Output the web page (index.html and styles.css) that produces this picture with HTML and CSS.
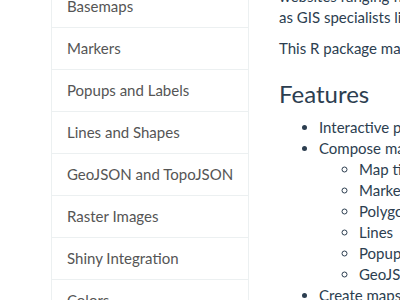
FILE: index.html
```
<!DOCTYPE html>
<html lang="en">
<head>
    <meta charset="UTF-8">
    <meta name="viewport" content="width=device-width, initial-scale=1.0">
    <link rel="stylesheet" href="styles.css">
</head>
<body>

    <div class="page">
        <div class="sidebar">
            <a class="list-item" href="#">Basemaps</a>
            <a class="list-item" href="#">Markers</a>
            <a class="list-item" href="#">Popups and Labels</a>
            <a class="list-item" href="#">Lines and Shapes</a>
            <a class="list-item" href="#">GeoJSON and TopoJSON</a>
            <a class="list-item" href="#">Raster Images</a>
            <a class="list-item" href="#">Shiny Integration</a>
            <a class="list-item" href="#">Colors</a>
            <a class="list-item" href="#">Legends</a>
        </div>

        <div class="content">
            <p>websites ranging from The New York Times and The Washington Post to GitHub and Flickr, as well<br>
            as GIS specialists like OpenStreetMap, Mapbox, and CartoDB.</p>
            <p>This R package makes it easy to integrate and control Leaflet maps in R.</p>

            <h2>Features</h2>
            <ul>
                <li>Interactive panning/zooming</li>
                <li>Compose maps using arbitrary combinations of:
                    <ul>
                        <li>Map tiles</li>
                        <li>Markers</li>
                        <li>Polygons</li>
                        <li>Lines</li>
                        <li>Popups</li>
                        <li>GeoJSON</li>
                    </ul>
                </li>
                <li>Create maps right from the R console or RStudio</li>
            </ul>
        </div>
    </div>

</body>
</html>
```

FILE: styles.css
```
body {
    margin: 0;
    overflow: hidden;
    font-family: Lato, "Open Sans", sans-serif;
    font-size: 15px;
    line-height: 21px;
    color: #2c3e50;
    background-color: #fff;
}

.page {
    display: flex;
    align-items: flex-start;
    margin-top: -15px;
    padding-left: 51px;
}

/* Left navigation list */
.sidebar {
    display: flex;
    flex-direction: column;
    flex: none;
    width: 198px;
}

.list-item {
    display: block;
    padding: 10px 15px;
    margin-bottom: -1px;
    border: 1px solid #ecf0f1;
    color: #555;
    text-decoration: none;
    white-space: nowrap;
}

/* Main column */
.content {
    flex: none;
    width: 760px;
    margin-left: 30px;
    padding-top: 1px;
}

.content p {
    margin: 0 0 10px;
    white-space: nowrap;
}

.content h2 {
    margin: 22px 0 10px;
    font-size: 24px;
    font-weight: 400;
    line-height: 1.1;
}

.content ul {
    margin: 0;
    padding-left: 40px;
}

.content ul ul {
    list-style-type: circle;
}
```
